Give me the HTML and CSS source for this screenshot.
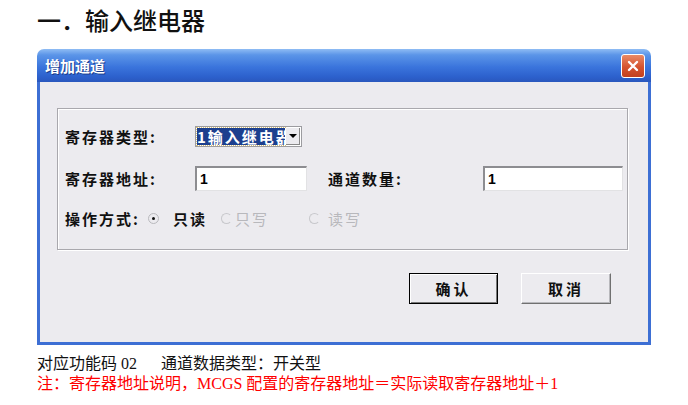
FILE: index.html
```html
<!DOCTYPE html>
<html>
<head>
    <meta charset="utf-8">
    <title>输入继电器</title>
    <link rel="stylesheet" href="styles.css">
</head>
<body>
    <!-- Heading -->
    <h1 class="heading">一．输入继电器</h1>

    <!-- Dialog window -->
    <div class="dialog">
        <div class="titlebar">
            <span class="title">增加通道</span>
            <span class="close">
                <svg width="14" height="14" viewBox="0 0 14 14">
                    <path d="M3 3 L11 11 M11 3 L3 11" stroke="#fff" stroke-width="2.4" stroke-linecap="round"/>
                </svg>
            </span>
        </div>
        <div class="client">
            <div class="group">
                <div class="row">
                    <span class="label w130">寄存器类型:</span>
                    <span class="combo">
                        <span class="combo-text">1输入继电器</span>
                        <span class="combo-btn"><span class="arrow"></span></span>
                    </span>
                </div>
                <div class="row row2">
                    <span class="label w130">寄存器地址:</span>
                    <span class="field f1">1</span>
                    <span class="label w155">通道数量:</span>
                    <span class="field f2">1</span>
                </div>
                <div class="row row3">
                    <span class="label w83">操作方式:</span>
                    <span class="radio checked"></span><span class="label opt o1">只读</span>
                    <span class="radio off r2"></span><span class="label opt off o2">只写</span>
                    <span class="radio off r3"></span><span class="label opt off o3">读写</span>
                </div>
            </div>
            <div class="buttons">
                <span class="btn default">确认</span>
                <span class="btn">取消</span>
            </div>
        </div>
    </div>

    <!-- Notes -->
    <p class="note first">对应功能码 02&nbsp;&nbsp;&nbsp;&nbsp;&nbsp;&nbsp;通道数据类型：开关型</p>
    <p class="note red">注：寄存器地址说明，MCGS 配置的寄存器地址＝实际读取寄存器地址＋1</p>
</body>
</html>
```

FILE: styles.css
```css
body {
    margin: 0;
    padding: 0 0 0 37px;
    background: #fff;
    font-family: "Liberation Serif", "Noto Sans CJK SC", serif;
}
.heading {
    margin: 0;
    padding-top: 5px;
    height: 44px;
    box-sizing: border-box;
    font-family: "Noto Sans CJK SC", sans-serif;
    font-size: 24px;
    font-weight: 500;
    line-height: 30px;
    color: #111;
}

/* ---------- dialog frame ---------- */
.dialog {
    width: 614px;
    margin-top: 5px;
}
.titlebar {
    height: 33px;
    border-radius: 7px 7px 0 0;
    background: linear-gradient(#8fbcf4 0%, #5b95e8 18%, #3a74dc 55%, #2c60cc 85%, #2a57bd 100%);
    display: flex;
    align-items: center;
    justify-content: space-between;
    padding: 0 6px 0 8px;
}
.title {
    font-family: "Noto Sans CJK SC", sans-serif;
    font-weight: 700;
    font-size: 15px;
    color: #fff;
    text-shadow: 1px 1px 0 #1a3c8c;
}
.close {
    width: 22px;
    height: 22px;
    border: 1px solid #fff;
    border-radius: 3px;
    background: linear-gradient(#e98a66, #d5532f 55%, #c2401f);
    display: flex;
    align-items: center;
    justify-content: center;
    margin-top: 1px;
}
.client {
    background: #ecebef;
    border: 3px solid #3d6fd4;
    border-top: none;
    height: 263px;
    box-sizing: border-box;
    padding: 26px 0 0 17px;
}

/* ---------- group box ---------- */
.group {
    width: 571px;
    height: 142px;
    border: 1px solid #a9a8ad;
    box-shadow: inset 1px 1px 0 #fff, 1px 1px 0 #fff;
    padding: 0 0 0 7px;
    box-sizing: border-box;
}
.row {
    display: flex;
    align-items: center;
    height: 22px;
    margin-top: 16px;
}
.row2 {
    height: 25px;
    margin-top: 19px;
}
.row3 {
    margin-top: 16px;
}
.label {
    font-family: "Noto Sans CJK SC", sans-serif;
    font-weight: 700;
    font-size: 15px;
    letter-spacing: 2px;
    color: #111;
    white-space: nowrap;
}
.w130 { width: 130px; }
.w155 { width: 155px; margin-left: 21px; }
.w83 { width: 83px; }

.combo {
    width: 107px;
    height: 21px;
    display: flex;
    background: #fff;
    border: 1px solid #9c9ca0;
    box-sizing: border-box;
    padding: 1px;
}
.combo-text {
    flex: 1;
    overflow: hidden;
    white-space: nowrap;
    background: #1c3f8e;
    outline: 1px dotted #d9c07a;
    color: #fff;
    font-family: "Noto Sans CJK SC", sans-serif;
    font-weight: 700;
    font-size: 15px;
    line-height: 17px;
    letter-spacing: 2px;
}
.combo-btn {
    width: 14px;
    background: #ecebef;
    border-left: 1px solid #fff;
    box-shadow: inset -1px -1px 0 #888;
    display: flex;
    align-items: center;
    justify-content: center;
}
.arrow {
    width: 0;
    height: 0;
    border-left: 4px solid transparent;
    border-right: 4px solid transparent;
    border-top: 4px solid #000;
}
.field {
    height: 25px;
    background: #fff;
    border-top: 2px solid #8d8d91;
    border-left: 2px solid #8d8d91;
    border-right: 1px solid #e2e2e4;
    border-bottom: 1px solid #e2e2e4;
    box-sizing: border-box;
    font-family: "Liberation Sans", sans-serif;
    font-weight: 700;
    font-size: 14px;
    line-height: 22px;
    padding-left: 3px;
}
.f1 { width: 112px; }
.f2 { width: 140px; }

.radio {
    width: 9px;
    height: 9px;
    border-radius: 50%;
    border: 1px solid #b9b9bd;
    position: relative;
    flex: none;
}
.radio.checked::after {
    content: "";
    position: absolute;
    left: 3px;
    top: 3px;
    width: 3px;
    height: 3px;
    background: #111;
    border-radius: 50%;
}
.radio.off {
    border-color: #c8c8cc;
    border-right-color: transparent;
}
.r2 { margin-left: 14px; }
.r3 { margin-left: 40px; }
.o1 { margin-left: 14px; }
.o2 { margin-left: 3px; }
.o3 { margin-left: 8px; }
.opt.off {
    color: #b8b8bc;
    font-weight: 400;
}

/* ---------- buttons ---------- */
.buttons {
    display: flex;
    gap: 23px;
    margin: 23px 0 0 352px;
}
.btn {
    width: 90px;
    height: 31px;
    box-sizing: border-box;
    border: 1px solid #fff;
    border-right-color: #707070;
    border-bottom-color: #707070;
    box-shadow: inset -1px -1px 0 #b8b8bc;
    display: flex;
    align-items: center;
    justify-content: center;
    font-family: "Noto Sans CJK SC", sans-serif;
    font-weight: 700;
    font-size: 15px;
    letter-spacing: 3px;
    color: #111;
}
.btn.default {
    width: 89px;
    border: 1px solid #000;
    box-shadow: inset 1px 1px 0 #fff, inset -1px -1px 0 #777;
}

/* ---------- notes ---------- */
.note {
    margin: 0;
    font-size: 16px;
    line-height: 20px;
    color: #111;
}
.note.first {
    margin-top: 9px;
}
.red {
    color: #f00;
}
```
